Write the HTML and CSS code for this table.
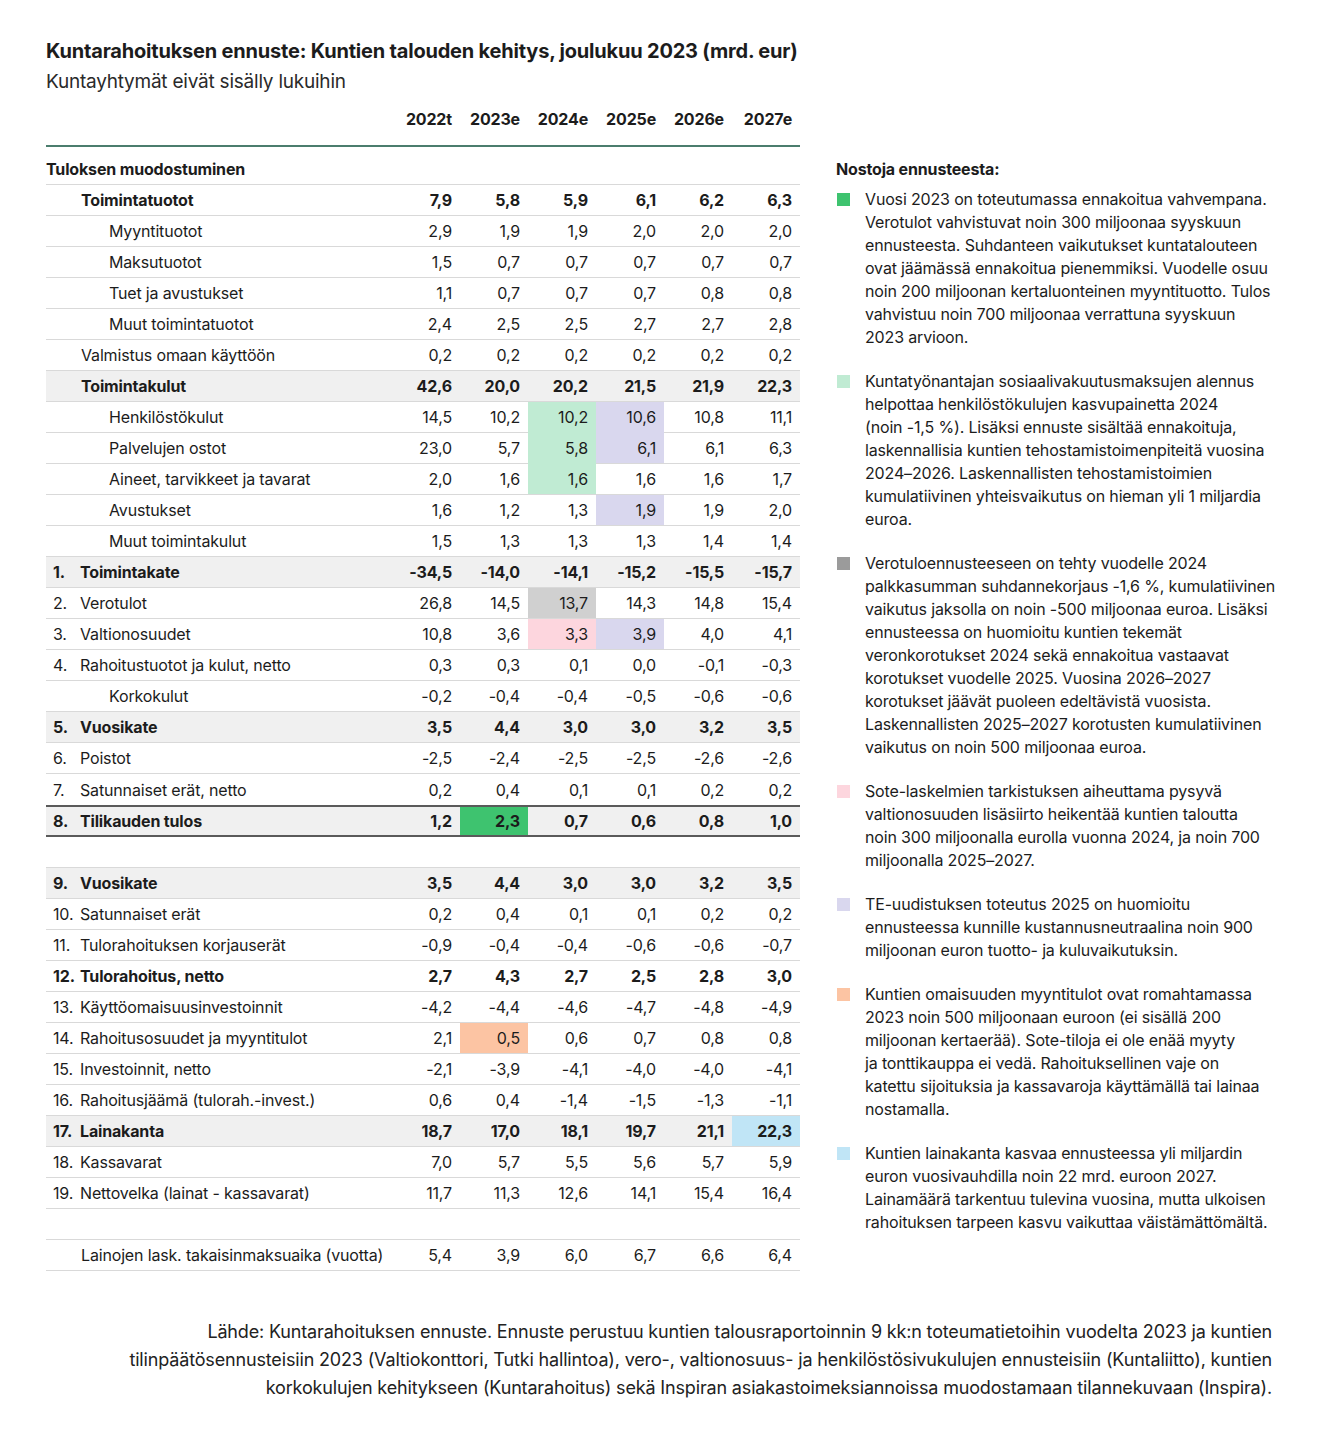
FILE: index.html
```html
<!DOCTYPE html>
<html lang="fi">
<head>
<meta charset="utf-8">
<title>Kuntarahoituksen ennuste</title>
<link rel="stylesheet" href="styles.css">
</head>
<body>
<div class="page">
  <h1 class="title">Kuntarahoituksen ennuste: Kuntien talouden kehitys, joulukuu 2023 (mrd. eur)</h1>
  <p class="subtitle">Kuntayhtymät eivät sisälly lukuihin</p>

  <div class="main">
    <div class="table">
      <div class="row head">
        <div class="label"></div>
        <div class="num">2022t</div><div class="num">2023e</div><div class="num">2024e</div><div class="num">2025e</div><div class="num">2026e</div><div class="num">2027e</div>
      </div>
      <div class="row section">
        <div class="label">Tuloksen muodostuminen</div>
      </div>

      <div class="row bold"><div class="label l1">Toimintatuotot</div><div class="num">7,9</div><div class="num">5,8</div><div class="num">5,9</div><div class="num">6,1</div><div class="num">6,2</div><div class="num">6,3</div></div>
      <div class="row"><div class="label l2">Myyntituotot</div><div class="num">2,9</div><div class="num">1,9</div><div class="num">1,9</div><div class="num">2,0</div><div class="num">2,0</div><div class="num">2,0</div></div>
      <div class="row"><div class="label l2">Maksutuotot</div><div class="num">1,5</div><div class="num">0,7</div><div class="num">0,7</div><div class="num">0,7</div><div class="num">0,7</div><div class="num">0,7</div></div>
      <div class="row"><div class="label l2">Tuet ja avustukset</div><div class="num">1,1</div><div class="num">0,7</div><div class="num">0,7</div><div class="num">0,7</div><div class="num">0,8</div><div class="num">0,8</div></div>
      <div class="row"><div class="label l2">Muut toimintatuotot</div><div class="num">2,4</div><div class="num">2,5</div><div class="num">2,5</div><div class="num">2,7</div><div class="num">2,7</div><div class="num">2,8</div></div>
      <div class="row"><div class="label l1">Valmistus omaan käyttöön</div><div class="num">0,2</div><div class="num">0,2</div><div class="num">0,2</div><div class="num">0,2</div><div class="num">0,2</div><div class="num">0,2</div></div>
      <div class="row bold shade"><div class="label l1">Toimintakulut</div><div class="num">42,6</div><div class="num">20,0</div><div class="num">20,2</div><div class="num">21,5</div><div class="num">21,9</div><div class="num">22,3</div></div>
      <div class="row"><div class="label l2">Henkilöstökulut</div><div class="num">14,5</div><div class="num">10,2</div><div class="num c-mint join-mint">10,2</div><div class="num c-lav join-lav">10,6</div><div class="num">10,8</div><div class="num">11,1</div></div>
      <div class="row"><div class="label l2">Palvelujen ostot</div><div class="num">23,0</div><div class="num">5,7</div><div class="num c-mint join-mint">5,8</div><div class="num c-lav">6,1</div><div class="num">6,1</div><div class="num">6,3</div></div>
      <div class="row"><div class="label l2">Aineet, tarvikkeet ja tavarat</div><div class="num">2,0</div><div class="num">1,6</div><div class="num c-mint">1,6</div><div class="num">1,6</div><div class="num">1,6</div><div class="num">1,7</div></div>
      <div class="row"><div class="label l2">Avustukset</div><div class="num">1,6</div><div class="num">1,2</div><div class="num">1,3</div><div class="num c-lav">1,9</div><div class="num">1,9</div><div class="num">2,0</div></div>
      <div class="row"><div class="label l2">Muut toimintakulut</div><div class="num">1,5</div><div class="num">1,3</div><div class="num">1,3</div><div class="num">1,3</div><div class="num">1,4</div><div class="num">1,4</div></div>
      <div class="row bold shade"><div class="label"><span class="no">1.</span>Toimintakate</div><div class="num">-34,5</div><div class="num">-14,0</div><div class="num">-14,1</div><div class="num">-15,2</div><div class="num">-15,5</div><div class="num">-15,7</div></div>
      <div class="row"><div class="label"><span class="no">2.</span>Verotulot</div><div class="num">26,8</div><div class="num">14,5</div><div class="num c-grey">13,7</div><div class="num">14,3</div><div class="num">14,8</div><div class="num">15,4</div></div>
      <div class="row"><div class="label"><span class="no">3.</span>Valtionosuudet</div><div class="num">10,8</div><div class="num">3,6</div><div class="num c-pink">3,3</div><div class="num c-lav">3,9</div><div class="num">4,0</div><div class="num">4,1</div></div>
      <div class="row"><div class="label"><span class="no">4.</span>Rahoitustuotot ja kulut, netto</div><div class="num">0,3</div><div class="num">0,3</div><div class="num">0,1</div><div class="num">0,0</div><div class="num">-0,1</div><div class="num">-0,3</div></div>
      <div class="row"><div class="label l2">Korkokulut</div><div class="num">-0,2</div><div class="num">-0,4</div><div class="num">-0,4</div><div class="num">-0,5</div><div class="num">-0,6</div><div class="num">-0,6</div></div>
      <div class="row bold shade"><div class="label"><span class="no">5.</span>Vuosikate</div><div class="num">3,5</div><div class="num">4,4</div><div class="num">3,0</div><div class="num">3,0</div><div class="num">3,2</div><div class="num">3,5</div></div>
      <div class="row"><div class="label"><span class="no">6.</span>Poistot</div><div class="num">-2,5</div><div class="num">-2,4</div><div class="num">-2,5</div><div class="num">-2,5</div><div class="num">-2,6</div><div class="num">-2,6</div></div>
      <div class="row before-total"><div class="label"><span class="no">7.</span>Satunnaiset erät, netto</div><div class="num">0,2</div><div class="num">0,4</div><div class="num">0,1</div><div class="num">0,1</div><div class="num">0,2</div><div class="num">0,2</div></div>
      <div class="row bold shade total"><div class="label"><span class="no">8.</span>Tilikauden tulos</div><div class="num">1,2</div><div class="num c-green">2,3</div><div class="num">0,7</div><div class="num">0,6</div><div class="num">0,8</div><div class="num">1,0</div></div>
      <div class="row blank"></div>

      <div class="row bold shade"><div class="label"><span class="no">9.</span>Vuosikate</div><div class="num">3,5</div><div class="num">4,4</div><div class="num">3,0</div><div class="num">3,0</div><div class="num">3,2</div><div class="num">3,5</div></div>
      <div class="row"><div class="label"><span class="no">10.</span>Satunnaiset erät</div><div class="num">0,2</div><div class="num">0,4</div><div class="num">0,1</div><div class="num">0,1</div><div class="num">0,2</div><div class="num">0,2</div></div>
      <div class="row"><div class="label"><span class="no">11.</span>Tulorahoituksen korjauserät</div><div class="num">-0,9</div><div class="num">-0,4</div><div class="num">-0,4</div><div class="num">-0,6</div><div class="num">-0,6</div><div class="num">-0,7</div></div>
      <div class="row bold"><div class="label"><span class="no">12.</span>Tulorahoitus, netto</div><div class="num">2,7</div><div class="num">4,3</div><div class="num">2,7</div><div class="num">2,5</div><div class="num">2,8</div><div class="num">3,0</div></div>
      <div class="row"><div class="label"><span class="no">13.</span>Käyttöomaisuusinvestoinnit</div><div class="num">-4,2</div><div class="num">-4,4</div><div class="num">-4,6</div><div class="num">-4,7</div><div class="num">-4,8</div><div class="num">-4,9</div></div>
      <div class="row"><div class="label"><span class="no">14.</span>Rahoitusosuudet ja myyntitulot</div><div class="num">2,1</div><div class="num c-peach">0,5</div><div class="num">0,6</div><div class="num">0,7</div><div class="num">0,8</div><div class="num">0,8</div></div>
      <div class="row"><div class="label"><span class="no">15.</span>Investoinnit, netto</div><div class="num">-2,1</div><div class="num">-3,9</div><div class="num">-4,1</div><div class="num">-4,0</div><div class="num">-4,0</div><div class="num">-4,1</div></div>
      <div class="row"><div class="label"><span class="no">16.</span>Rahoitusjäämä (tulorah.-invest.)</div><div class="num">0,6</div><div class="num">0,4</div><div class="num">-1,4</div><div class="num">-1,5</div><div class="num">-1,3</div><div class="num">-1,1</div></div>
      <div class="row bold shade"><div class="label"><span class="no">17.</span>Lainakanta</div><div class="num">18,7</div><div class="num">17,0</div><div class="num">18,1</div><div class="num">19,7</div><div class="num">21,1</div><div class="num c-sky">22,3</div></div>
      <div class="row"><div class="label"><span class="no">18.</span>Kassavarat</div><div class="num">7,0</div><div class="num">5,7</div><div class="num">5,5</div><div class="num">5,6</div><div class="num">5,7</div><div class="num">5,9</div></div>
      <div class="row"><div class="label"><span class="no">19.</span>Nettovelka (lainat - kassavarat)</div><div class="num">11,7</div><div class="num">11,3</div><div class="num">12,6</div><div class="num">14,1</div><div class="num">15,4</div><div class="num">16,4</div></div>
      <div class="row blank"></div>
      <div class="row"><div class="label l1">Lainojen lask. takaisinmaksuaika (vuotta)</div><div class="num">5,4</div><div class="num">3,9</div><div class="num">6,0</div><div class="num">6,7</div><div class="num">6,6</div><div class="num">6,4</div></div>
    </div>

    <aside class="notes">
      <h2 class="notes-title">Nostoja ennusteesta:</h2>
      <div class="note"><span class="sq c-green"></span><p>Vuosi 2023 on toteutumassa ennakoitua vahvempana. Verotulot vahvistuvat noin 300 miljoonaa syyskuun ennusteesta. Suhdanteen vaikutukset kuntatalouteen ovat jäämässä ennakoitua pienemmiksi. Vuodelle osuu noin 200 miljoonan kertaluonteinen myyntituotto. Tulos vahvistuu noin 700 miljoonaa verrattuna syyskuun 2023 arvioon.</p></div>
      <div class="note"><span class="sq c-mint"></span><p>Kuntatyönantajan sosiaalivakuutusmaksujen alennus helpottaa henkilöstökulujen kasvupainetta 2024 (noin&nbsp;-1,5&nbsp;%). Lisäksi ennuste sisältää ennakoituja, laskennallisia kuntien tehostamistoimenpiteitä vuosina 2024–2026. Laskennallisten tehostamistoimien kumulatiivinen yhteisvaikutus on hieman yli 1 miljardia euroa.</p></div>
      <div class="note"><span class="sq c-dgrey"></span><p>Verotuloennusteeseen on tehty vuodelle 2024 palkkasumman suhdannekorjaus -1,6&nbsp;%, kumulatiivinen vaikutus jaksolla on noin -500 miljoonaa euroa. Lisäksi ennusteessa on huomioitu kuntien tekemät veronkorotukset 2024 sekä ennakoitua vastaavat korotukset vuodelle 2025. Vuosina 2026–2027 korotukset jäävät puoleen edeltävistä vuosista. Laskennallisten 2025–2027 korotusten kumulatiivinen vaikutus on noin 500 miljoonaa euroa.</p></div>
      <div class="note"><span class="sq c-pink"></span><p>Sote-laskelmien tarkistuksen aiheuttama pysyvä valtionosuuden lisäsiirto heikentää kuntien taloutta noin&nbsp;300 miljoonalla eurolla vuonna 2024, ja noin 700 miljoonalla 2025–2027.</p></div>
      <div class="note"><span class="sq c-lav"></span><p>TE-uudistuksen toteutus 2025 on huomioitu ennusteessa kunnille kustannusneutraalina noin 900 miljoonan euron tuotto- ja kuluvaikutuksin.</p></div>
      <div class="note"><span class="sq c-peach"></span><p>Kuntien omaisuuden myyntitulot ovat romahtamassa 2023 noin 500 miljoonaan euroon (ei sisällä 200 miljoonan kertaerää). Sote-tiloja ei ole enää myyty ja&nbsp;tonttikauppa ei vedä. Rahoituksellinen vaje on katettu&nbsp;sijoituksia ja kassavaroja käyttämällä tai lainaa nostamalla.</p></div>
      <div class="note"><span class="sq c-sky"></span><p>Kuntien lainakanta kasvaa ennusteessa yli miljardin euron vuosivauhdilla noin 22 mrd. euroon 2027. Lainamäärä tarkentuu tulevina vuosina, mutta ulkoisen rahoituksen tarpeen kasvu vaikuttaa väistämättömältä.</p></div>
    </aside>
  </div>

  <p class="source">Lähde: Kuntarahoituksen ennuste. Ennuste perustuu kuntien talousraportoinnin 9 kk:n toteumatietoihin vuodelta 2023 ja kuntien tilinpäätösennusteisiin 2023 (Valtiokonttori, Tutki hallintoa), vero-, valtionosuus- ja henkilöstösivukulujen ennusteisiin (Kuntaliitto), kuntien korkokulujen kehitykseen (Kuntarahoitus) sekä Inspiran asiakastoimeksiannoissa muodostamaan tilannekuvaan (Inspira).</p>
</div>
</body>
</html>
```
FILE: styles.css
```css
* { box-sizing: border-box; }
html, body { margin: 0; padding: 0; background: #fff; }
body {
  font-family: Inter, "Liberation Sans", Arial, sans-serif;
  color: #1c1c1c;
  letter-spacing: -0.01em;
}
.page { padding: 38px 0 0 46px; width: 1320px; }
.title {
  margin: 0;
  font-size: 20px;
  line-height: 26px;
  font-weight: 700;
  letter-spacing: -0.01em;
}
.subtitle {
  margin: 5px 0 0;
  font-size: 19px;
  line-height: 26px;
  font-weight: 400;
  color: #2a2a2a;
  letter-spacing: -0.012em;
}
.main { display: flex; align-items: flex-start; gap: 36px; margin-top: 9px; }
.table { width: 754px; font-size: 16px; }
.row {
  display: grid;
  grid-template-columns: 346px repeat(6, 68px);
  height: 31px;
  align-items: stretch;
  border-bottom: 1px solid #d9d9d9;
}
.row > div { display: flex; align-items: center; }
.label { padding-left: 7px; white-space: nowrap; }
.label.l1 { padding-left: 35px; }
.label.l2 { padding-left: 63px; }
.no { display: inline-block; width: 27px; }
.num { justify-content: flex-end; padding-right: 8px; }
.bold { font-weight: 700; }
.shade { background: #f0f0f0; }
.head {
  height: 43px;
  padding-bottom: 12px;
  border-bottom: 2px solid #4b7d6d;
  font-weight: 700;
}
.section {
  height: 38px;
  padding-top: 7px;
  font-weight: 700;
}
.section .label { padding-left: 0; }
.before-total { border-bottom: 0; }
.total { border-top: 2px solid #5a5a5a; border-bottom: 2px solid #5a5a5a; height: 32px; }
.blank { height: 31px; }

.c-green { background: #3ec36f; }
.c-mint { background: #c0ebd3; }
.c-lav { background: #d9d7ee; }
.c-grey { background: #d0d0d0; }
.c-dgrey { background: #9b9b9b; }
.c-pink { background: #fdd6de; }
.c-peach { background: #fcc4a3; }
.c-sky { background: #c0e5f6; }
.join-mint { box-shadow: 0 1px 0 #c0ebd3; }
.join-lav { box-shadow: 0 1px 0 #d9d7ee; }

.notes { width: 444px; padding-top: 54px; font-size: 16px; line-height: 23px; }
.notes-title { margin: 0 0 7px; font-size: 16px; line-height: 23px; font-weight: 700; }
.note { display: flex; align-items: flex-start; margin-bottom: 21px; }
.note p { margin: 0; width: 412px; }
.sq { flex: none; width: 13px; height: 13px; margin: 5px 15px 0 1px; }

.source {
  margin: 47px 0 0 74px;
  width: 1152px;
  text-align: right;
  font-size: 18px;
  line-height: 28px;
  color: #222;
}
```
